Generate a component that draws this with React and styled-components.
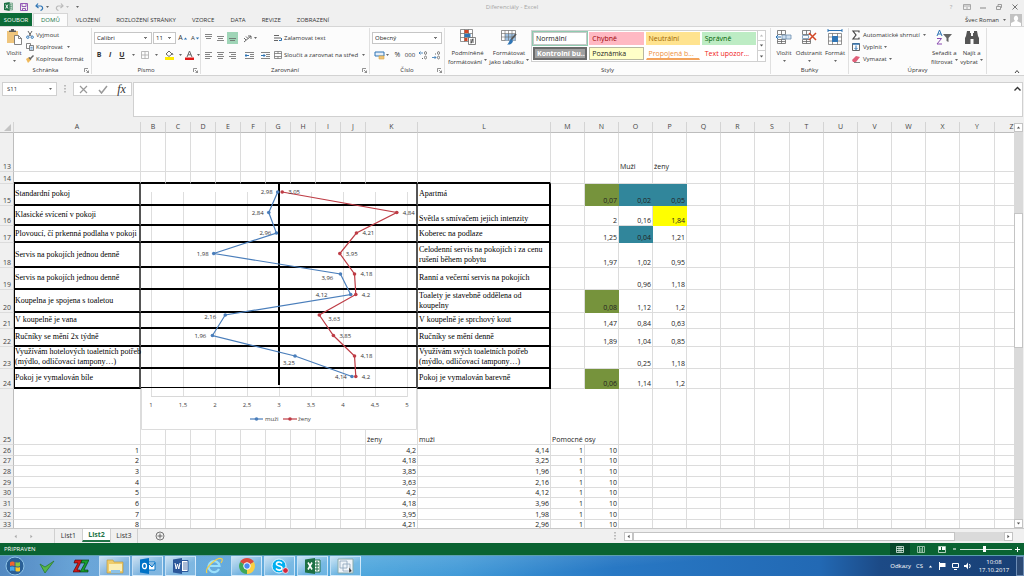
import React from "react";
import styled, { createGlobalStyle } from "styled-components";

const GlobalStyle = createGlobalStyle`
  * {
    box-sizing: border-box;
  }
  body {
    margin: 0;
    font-family: "Open Sans", "Noto Sans", sans-serif;
    font-size: 6px;
    line-height: 8px;
    color: #333;
    background: #f0f0f0;
  }
  button, input, select, textarea {
    font: inherit;
    color: inherit;
    margin: 0;
    padding: 0;
    border: 0;
    background: none;
    outline: none;
  }
  svg {
    display: block;
    flex: none;
  }
`;

const Window = styled.div`
  display: flex;
  flex-direction: column;
  height: 100vh;
  overflow: hidden;
`;

/* ---------- title bar and tabs ---------- */

const TitleBar = styled.header`
  display: grid;
  grid-template-columns: 1fr auto 1fr;
  align-items: center;
  height: 13px;
  padding: 0 4px;
  color: #a5a5a5;
`;

const QuickAccess = styled.div`
  display: flex;
  align-items: center;
  gap: 6px;
`;

const WindowButtons = styled.div`
  display: flex;
  justify-content: flex-end;
  gap: 6px;
`;

const IconButton = styled.button`
  display: flex;
  align-items: center;
  justify-content: center;
  min-width: ${p => p.$width || 10}px;
  height: 12px;
  background: ${p => (p.$active ? "#9fd5b7" : "transparent")};
`;

const TabBar = styled.nav`
  display: flex;
  height: 13px;
  align-items: stretch;
`;

const FileTab = styled.button`
  width: 32px;
  background: #0b6b37;
  color: #fff;
`;

const Tab = styled.button`
  padding: 0 8px;
  ${p =>
    p.$active &&
    `
    margin-left: 1px;
    padding: 0 7px;
    background: #fcfcfc;
    border: 1px solid #d6d6d6;
    border-bottom: 0;
    color: #217346;
  `}
`;

const Account = styled.div`
  display: flex;
  align-items: center;
  gap: 4px;
  margin-left: auto;
  padding-right: 2px;
`;

/* ---------- ribbon ---------- */

const Ribbon = styled.section`
  display: flex;
  height: 50px;
  background: #fcfcfc;
  border-top: 1px solid #d6d6d6;
  border-bottom: 1px solid #d2d2d2;
`;

const Group = styled.div`
  display: flex;
  flex-direction: column;
  width: ${p => p.$width}px;
  margin: 1px 0;
  border-right: 1px solid #e0e0e0;
`;

const GroupBody = styled.div`
  display: flex;
  flex: 1;
  padding: 1px 1px 0 2px;
`;

const GroupLabel = styled.div`
  display: flex;
  align-items: center;
  justify-content: center;
  position: relative;
  height: 8px;
`;

const Launcher = styled.button`
  position: absolute;
  right: 2px;
  top: 2px;
`;

const BigButton = styled.button`
  display: flex;
  flex-direction: column;
  align-items: center;
  width: ${p => p.$width}px;
  line-height: 8px;
  white-space: nowrap;
  svg:first-child {
    margin-bottom: 3px;
  }
`;

const BigLine = styled.span`
  display: flex;
  align-items: center;
  justify-content: center;
  gap: 2px;
  height: 9px;
`;

const BigArrow = styled.span`
  padding-top: 3px;
`;

const SmallList = styled.div`
  display: flex;
  flex-direction: column;
`;

const SumList = styled(SmallList)`
  width: 80px;
`;

const SmallButton = styled.button`
  display: flex;
  align-items: center;
  gap: 2px;
  height: 12px;
  white-space: nowrap;
`;

const ToolRows = styled.div`
  display: flex;
  flex-direction: column;
  gap: 5px;
  padding-top: 3px;
  width: ${p => (p.$width ? p.$width + "px" : "auto")};
`;

const ToolRow = styled.div`
  display: flex;
  align-items: center;
  gap: ${p => p.$gap || 0}px;
  height: 12px;
`;

const Select = styled.select`
  appearance: none;
  width: ${p => p.$width}px;
  height: 12px;
  padding: 0 2px;
  color: #222;
  border: 1px solid #c6c6c6;
  background-color: #fff;
  background-image: linear-gradient(45deg, transparent 50%, #777 50%),
    linear-gradient(-45deg, transparent 50%, #777 50%);
  background-size: 2px 2px;
  background-position: right 5px center, right 3px center;
  background-repeat: no-repeat;
`;

const Letter = styled.span`
  font-size: 7px;
  font-weight: ${p => (p.$bold ? 700 : 400)};
  font-style: ${p => (p.$italic ? "italic" : "normal")};
  text-decoration: ${p => (p.$underline ? "underline" : "none")};
`;

const Gallery = styled.div`
  display: grid;
  grid-template-columns: repeat(4, 1fr) 8px;
  width: 235px;
  height: 32px;
  margin-top: 1px;
  margin-left: 1px;
  border: 1px solid #d0d0d0;
  background: #fff;
`;

const StyleCell = styled.button`
  height: 13px;
  margin: 1px;
  padding: 0 2px;
  text-align: left;
  font-size: 7px;
  line-height: 9px;
  white-space: nowrap;
  overflow: hidden;
  color: ${p => p.$color};
  background: ${p => p.$bg};
  border: ${p => p.$border || "1px solid transparent"};
  border-bottom: ${p => p.$bottom || p.$border || "1px solid transparent"};
  outline: ${p => (p.$selected ? "1px solid #8fcbb0" : "none")};
  font-weight: ${p => (p.$bold ? 700 : 400)};
`;

const GalleryArrows = styled.div`
  grid-column: 5;
  grid-row: 1 / 3;
  display: grid;
  grid-template-rows: repeat(3, 1fr);
  border-left: 1px solid #d0d0d0;
`;

const ArrowButton = styled.button`
  display: flex;
  align-items: center;
  justify-content: center;
  border-bottom: 1px solid #d0d0d0;
  &:last-child {
    border-bottom: 0;
  }
`;

const Collapse = styled.button`
  margin: auto 4px 1px auto;
`;

/* ---------- formula bar ---------- */

const FormulaBar = styled.section`
  display: flex;
  align-items: flex-start;
  height: 46px;
  padding: 6px 1px 5px 2px;
`;

const NameBox = styled.label`
  display: flex;
  align-items: center;
  width: 55px;
  height: 14px;
  padding: 0 4px;
  background: #fff;
  border: 1px solid #d0d0d0;
  input {
    flex: 1;
    min-width: 0;
  }
`;

const Grip = styled.div`
  display: flex;
  align-items: center;
  justify-content: center;
  width: 16px;
  height: 14px;
`;

const FormulaButtons = styled.div`
  display: flex;
  align-items: center;
  justify-content: space-around;
  width: 59px;
  height: 14px;
  background: #fff;
  border: 1px solid #d0d0d0;
`;

const Fx = styled.span`
  font: italic 400 12px/12px "Liberation Serif", serif;
  color: #333;
`;

const FormulaField = styled.div`
  display: flex;
  flex: 1;
  align-self: stretch;
  margin-left: 1px;
  padding: 0 0 2px 2px;
  background: #fff;
  border: 1px solid #d0d0d0;
  textarea {
    flex: 1;
    resize: none;
  }
`;

/* ---------- sheet ---------- */

const Workspace = styled.main`
  display: flex;
  flex: 1;
  min-height: 0;
`;

const SheetPane = styled.div`
  position: relative;
  flex: 1;
  min-width: 0;
  overflow: hidden;
  background: #fff;
`;

const Sheet = styled.table`
  table-layout: fixed;
  width: 1029px;
  border-collapse: separate;
  border-spacing: 0;
  font-size: 7px;
  line-height: 8px;
  color: #222;
`;

const HeadCell = styled.th`
  height: 11px;
  padding: 0;
  font-weight: 400;
  color: #444;
  background: #f0f0f0;
  border-right: 1px solid #d4d4d4;
  border-bottom: 1px solid #bdbdbd;
`;

const RowHead = styled.th`
  padding: 0 2px 0 0;
  font-weight: 400;
  text-align: right;
  vertical-align: bottom;
  color: #444;
  background: #f0f0f0;
  border-right: 1px solid #bdbdbd;
  border-bottom: 1px solid #dcdcdc;
`;

const Cell = styled.td`
  padding: 0 1px;
  text-align: ${p => (p.$text ? "left" : "right")};
  vertical-align: bottom;
  white-space: nowrap;
  background: ${p => p.$fill || "transparent"};
  border-right: 1px solid ${p => p.$fill || "#dcdcdc"};
  border-bottom: 1px solid ${p => p.$fill || "#dcdcdc"};
`;

const Statement = styled.td`
  padding: 0 0 0 ${p => (p.$end ? 1 : 0)}px;
  font-family: "Liberation Serif", "Times New Roman", serif;
  font-size: 8px;
  line-height: 10px;
  color: #000;
  white-space: nowrap;
  vertical-align: ${p => (p.$low ? "bottom" : "middle")};
  border-bottom: 2px solid #000;
  border-right: 2px solid ${p => (p.$end ? "#000" : "#555")};
  border-left: ${p => (p.$end ? "0" : "1px solid #000")};
`;

const ChartCell = styled.td`
  padding: 0;
  border-bottom: 2px solid #000;
  border-right: 2px solid #555;
`;

const BoxTop = styled.td`
  padding: 0;
  border-right: 1px solid #dcdcdc;
  border-bottom: 2px solid #000;
`;

const Chart = styled.svg`
  position: absolute;
  left: 141px;
  top: 60px;
  font-size: 6px;
`;

const VScroll = styled.div`
  display: flex;
  flex-direction: column;
  width: 10px;
  padding: 1px 1px 0 0;
  background: #f0f0f0;
`;

const ScrollButton = styled.button`
  display: flex;
  align-items: center;
  justify-content: center;
  width: 9px;
  height: 9px;
  background: #fff;
  border: 1px solid #c4c4c4;
`;

const VTrack = styled.div`
  display: grid;
  flex: 1;
  grid-template-rows: 82fr 136fr 172fr;
  background: #dadada;
`;

const Thumb = styled.div`
  background: #fff;
  border: 1px solid #c4c4c4;
`;

const SheetBar = styled.nav`
  display: flex;
  align-items: stretch;
  height: 15px;
  font-size: 7px;
  border-top: 1px solid #c8c8c8;
`;

const SheetArrows = styled.div`
  display: flex;
  align-items: center;
  gap: 11px;
  width: 54px;
  padding-left: 13px;
`;

const SheetTab = styled.button`
  width: 28px;
  border-left: 1px solid #d0d0d0;
  border-right: ${p => (p.$last ? "1px solid #d0d0d0" : "0")};
  ${p =>
    p.$active &&
    `
    background: #fff;
    color: #217346;
    font-weight: 700;
    border-bottom: 2px solid #217346;
    margin-bottom: 1px;
  `}
`;

const AddSheet = styled.button`
  margin-left: 17px;
`;

const HScroll = styled.div`
  display: flex;
  align-items: center;
  width: 40%;
  margin-left: auto;
  padding-right: 11px;
`;

const HTrack = styled.div`
  display: grid;
  flex: 1;
  grid-template-columns: 325fr 49fr;
  height: 9px;
  background: #dadada;
`;

const StatusBar = styled.footer`
  display: flex;
  align-items: center;
  justify-content: space-between;
  height: 12px;
  padding: 0 4px;
  color: #fff;
  background: #0a6332;
`;

const ViewTools = styled.div`
  display: flex;
  align-items: center;
  gap: 1px;
`;

const ViewButton = styled.button`
  display: flex;
  align-items: center;
  justify-content: center;
  width: 20px;
  height: 12px;
  background: ${p => (p.$active ? "#07472a" : "transparent")};
`;

const Zoom = styled.input`
  appearance: none;
  width: 52px;
  height: 8px;
  margin: 0 2px;
  background: linear-gradient(#d8e8df, #d8e8df) center / 100% 1px no-repeat;
  &::-webkit-slider-thumb {
    appearance: none;
    width: 3px;
    height: 6px;
    background: #fff;
  }
`;

/* ---------- taskbar ---------- */

const Taskbar = styled.footer`
  display: flex;
  align-items: stretch;
  height: 21px;
  color: #fff;
  border-top: 1px solid #5d9fb0;
  background: linear-gradient(175deg, rgba(255, 255, 255, 0.18) 30%, transparent 60%),
    linear-gradient(90deg, #2d6fb4 0, #4a92d0 8%, #3f9fda 35%, #3b96d6 45%, #2878c4 60%, #2269b4 80%, #1c4a86 86%, #183f74 100%);
`;

const TaskButton = styled.button`
  display: flex;
  align-items: center;
  justify-content: center;
  width: ${p => p.$width || 31}px;
  margin-right: 2px;
  ${p =>
    p.$open &&
    `
    border: 1px solid rgba(225, 242, 255, 0.7);
    background: linear-gradient(150deg, rgba(255, 255, 255, 0.65), rgba(255, 255, 255, 0.15) 60%);
  `}
`;

const Tray = styled.div`
  display: flex;
  align-items: center;
  gap: 5px;
  margin-left: auto;
`;

const Clock = styled.div`
  width: 34px;
  text-align: center;
`;

const ShowDesktop = styled.button`
  align-self: stretch;
  width: 8px;
  background: #2c4a74;
  border: 1px solid #6d8db5;
`;

/* ---------- icons ---------- */

const Icon = ({ w = 10, h = w, box, children }) => (
  <svg width={w} height={h} viewBox={box || `0 0 ${w} ${h}`} fill="none" stroke="#666" aria-hidden="true">
    {children}
  </svg>
);

const Down = ({ color = "#666" }) => (
  <Icon w={3} h={2}>
    <path d="M0 0h3L1.500 2z" fill={color} stroke="none" />
  </Icon>
);

const Tri = ({ dir = 0, color = "#555" }) => (
  <Icon w={5}>
    <path d="M.8 3.600h3.400L2.500 1.500z" fill={color} stroke="none" transform={`rotate(${dir} 2.5 2.5)`} />
  </Icon>
);

const ExcelIcon = ({ size = 9 }) => (
  <Icon w={size} box="0 0 16 16">
    <path d="M9 2h6v12H9z" fill="#fff" stroke="#217346" />
    <path d="M10 5h4M10 8h4M10 11h4M12 3v10" stroke="#217346" />
    <path d="M0 1.600 10 0v16L0 14.400z" fill="#1e7145" stroke="none" />
    <path d="m3 4.500 4 7M7 4.500l-4 7" stroke="#fff" strokeWidth="1.600" />
  </Icon>
);

const LauncherIcon = () => (
  <Icon w={5}>
    <path d="M.5 4V.5H4M2 2l2.500 2.500M4.500 2.500v2h-2" strokeWidth=".7" />
  </Icon>
);

const AlignIcon = ({ lines, y = 1 }) => (
  <Icon w={9}>
    {lines.map(([x, len], i) => (
      <path key={i} d={`M${x} ${y + i * 2 + 0.5}h${len}`} strokeWidth=".8" />
    ))}
  </Icon>
);

const IndentIcon = ({ flip }) => (
  <Icon w={9}>
    <path d="M0 1.500h9M5 3.500h4M5 5.500h4M0 7.500h9" strokeWidth=".8" />
    <path d={flip ? "M0 4.500h4M2.500 3 4 4.500 2.500 6" : "M4 4.500H0M1.500 3 0 4.500 1.500 6"} stroke="#2f75b5" />
  </Icon>
);

const DecimalIcon = ({ flip }) => (
  <Icon w={9}>
    <path d={flip ? "M0 6.500h4M2.500 5 4 6.500 2.500 8" : "M4 2H0M1.500.5 0 2l1.500 1.500"} stroke="#2f75b5" strokeWidth=".8" />
    <ellipse cx="6.500" cy="2" rx="1" ry="1.500" strokeWidth=".8" />
    <ellipse cx="6.500" cy="6.500" rx="1" ry="1.500" strokeWidth=".8" />
    <path d={flip ? "M3 3h1" : "M3 7.500h1"} />
  </Icon>
);

const CellsIcon = ({ kind }) => (
  <Icon w={16}>
    <path d="M1.500 1.500h8v4h-8zM5.500 1.500v4M1.500 10.500h8v4h-8zM5.500 10.500v4M1.500 12.500h8" strokeWidth=".8" />
    {kind === "insert" && <path d="M6 6h9v4H6zM10 6v4" fill="#cfe0f0" stroke="#6d8fb0" strokeWidth=".8" />}
    {kind === "insert" && <path d="M5 8H0M2 6 0 8l2 2" stroke="#2f75b5" />}
    {kind === "delete" && <path d="M1.500 6.500h6v3h-6z" stroke="#6d8fb0" strokeWidth=".8" />}
    {kind === "delete" && <path d="m8 4 7 7M15 4l-7 7" stroke="#d24726" strokeWidth="1.500" />}
  </Icon>
);

const FormatIcon = () => (
  <Icon w={16}>
    <path d="M1 0v3M15 0v3M1 1.500h14" stroke="#2f75b5" />
    <path d="M1.500 4.500h13v11h-13zM1.500 8h13M1.500 12h13M5.500 4.500v11M10.500 4.500v11" fill="#fff" strokeWidth=".7" />
    <path d="M5 7h6v6H5z" fill="#2f75b5" stroke="none" />
  </Icon>
);

const PasteIcon = () => (
  <Icon w={16}>
    <path d="M1 2h11v12H1z" fill="#efc57c" stroke="none" />
    <path d="M3 3V1.500h2V0h3v1.500h2V3z" fill="#5c5c5c" stroke="none" />
    <path d="M8.500 6.500h4l3 3v6h-7z" fill="#fff" strokeWidth=".8" />
    <path d="M12.500 6.500v3h3" strokeWidth=".8" />
  </Icon>
);

const CutIcon = () => (
  <Icon w={8}>
    <path d="M2 0l3 5M6 0 3 5" />
    <circle cx="1.800" cy="6.200" r="1.200" stroke="#2f75b5" />
    <circle cx="6.200" cy="6.200" r="1.200" stroke="#2f75b5" />
  </Icon>
);

const CopyIcon = () => (
  <Icon w={8}>
    <path d="M.5.5h4v5h-4z" fill="#fff" strokeWidth=".8" />
    <path d="M3.500 2.500h4v5h-4z" fill="#dce9f5" strokeWidth=".8" />
    <path d="M4.500 4.500h2M4.500 6h2" stroke="#2f75b5" strokeWidth=".6" />
  </Icon>
);

const BrushIcon = () => (
  <Icon w={8}>
    <path d="M0 4l3-2 2 3-3 3z" fill="#f0b95a" stroke="none" />
    <path d="M3 2.500 5 4.500M4.500 3.500 7.500.5" strokeWidth="1.500" />
  </Icon>
);

const CondIcon = () => (
  <Icon w={16}>
    <path d="M.5.5h12v12H.5zM.5 4.500h12M.5 8.500h12M4.500.5v12M8.500.5v12" fill="#fff" strokeWidth=".7" />
    <path d="M4.500 1h4v3h-4zM4.500 9h3v3h-3z" fill="#d24726" stroke="none" />
    <path d="M4.500 5h6v3h-6z" fill="#2f75b5" stroke="none" />
    <path d="M8.500 8.500h7v7h-7z" fill="#fff" strokeWidth=".8" />
    <path d="M10 11h4M10 13h4M13 9.500l-2 5" stroke="#333" strokeWidth=".8" />
  </Icon>
);

const TableIcon = () => (
  <Icon w={16}>
    <path d="M.5 1.500h14v10H.5z" fill="#fff" strokeWidth=".7" />
    <path d="M4 5h10.500v6.500H4z" fill="#9dc0e2" stroke="none" />
    <path d="M.5 4.500h14M.5 8h14M4 1.500v10M7.500 1.500v10M11 1.500v10" strokeWidth=".6" />
    <path d="m15 5-5 6" stroke="#555" strokeWidth="1.800" />
    <path d="m10 10 2 2c-1 3-3 4-6 3.500 2-1 2-4 4-5.500z" fill="#2f75b5" stroke="none" />
  </Icon>
);

const SortIcon = () => (
  <Icon w={16}>
    <path d="M1 7 3.500 1 6 7M2 5h3" stroke="#2f75b5" />
    <path d="M1 9.500h4.500L1 15h5" stroke="#8a4ab0" />
    <path d="M7 5h9l-3.500 4v4L10.500 12V9z" fill="#666" stroke="none" />
  </Icon>
);

const FindIcon = () => (
  <Icon w={16}>
    <path d="M3 2h3v2h1v3h2V4h1V2h3l1 5 1 2v6H9.500v-5h-3v5H1V9l1-2z" fill="#555" stroke="none" />
  </Icon>
);

/* ---------- data ---------- */

const columns = [
  ["A", 127],
  ..."BCDEFGHIJ".split("").map(c => [c, 25]),
  ["K", 52],
  ["L", 133],
  ..."MNOPQR".split("").map(c => [c, 34]),
  ["S", 35],
  ..."TUVWX".split("").map(c => [c, 34]),
  ["Y", 35],
  ["Z", 34]
];

const GREEN = "#76933c";
const TEAL = "#31869b";

// row number, height, left statement, right statement, N / O / P values with fills
const profile = [
  [15, 22, "Standardní pokoj", "Apartmá", ["0,07", GREEN], ["0,02", TEAL], ["0,05", TEAL]],
  [16, 20, "Klasické svícení v pokoji", "Světla s smívačem jejich intenzity", ["2"], ["0,16"], ["1,84", "#ffff00"]],
  [17, 17, "Plovoucí, čí prkenná podlaha v pokoji", "Koberec na podlaze", ["1,25"], ["0,04", TEAL], ["1,21"]],
  [18, 25, "Servis na pokojích jednou denně", "Celodenní servis na pokojích i za cenu\nrušení během pobytu", ["1,97"], ["1,02"], ["0,95"]],
  [19, 22, "Servis na pokojích jednou denně", "Ranní a večerní servis na pokojích", [""], ["0,96"], ["1,18"]],
  [20, 23, "Koupelna je spojena s toaletou", "Toalety je stavebně oddělena od\nkoupelny", ["0,08", GREEN], ["1,12"], ["1,2"]],
  [21, 16, "V koupelně je vana", "V koupelně je sprchový kout", ["1,47"], ["0,84"], ["0,63"]],
  [22, 18, "Ručníky se mění 2x týdně", "Ručníky se mění denně", ["1,89"], ["1,04"], ["0,85"]],
  [23, 22, "Využívám hotelových toaletních potřeb\n(mýdlo, odličovací tampony…)", "Využívám svých toaletních potřeb\n(mýdlo, odličovací tampony…)", [""], ["0,25"], ["1,18"]],
  [24, 20, "Pokoj je vymalován bíle", "Pokoj je vymalován barevně", ["0,06", GREEN], ["1,14"], ["1,2"]]
];

const source = [
  [26, 11, "4,2", "4,14"],
  [27, 10, "4,18", "3,25"],
  [28, 11, "3,85", "1,96"],
  [29, 11, "3,63", "2,16"],
  [30, 10, "4,2", "4,12"],
  [31, 11, "4,18", "3,96"],
  [32, 11, "3,95", "1,98"],
  [33, 10, "4,21", "2,96"]
];

// value, label offset from the marker
const men = [
  [2.98, -17, 2], [2.84, -17, 2], [2.96, -17, 2], [1.98, -17, 2], [3.96, -19, 6],
  [4.12, -35, 2], [2.16, -21, 4], [1.96, -18, 2], [3.25, -12, 9], [4.14, -17, 2]
];
const women = [
  [3.05, 6, 2], [4.84, 6, 2], [4.21, 6, 2], [3.95, 6, 2], [4.18, 6, 2],
  [4.2, 6, 2], [3.63, 9, 6], [3.85, 6, 2], [4.18, 6, 2], [4.2, 6, 2]
];

const px = v => 10 + (v - 1) * 64;
const py = i => 10 + i * 20.5;
const comma = v => String(v).replace(".", ",");

const Series = ({ data, color }) => (
  <g>
    <polyline points={data.map(([v], i) => `${px(v)},${py(i)}`).join(" ")} fill="none" stroke={color} strokeWidth="1.200" />
    {data.map(([v, dx, dy], i) => (
      <g key={i}>
        <circle cx={px(v)} cy={py(i)} r="1.800" fill={color} />
        <text x={px(v) + dx} y={py(i) + dy} fill="#333">{comma(v)}</text>
      </g>
    ))}
  </g>
);

const ProfileChart = () => (
  <Chart width="277" height="250" viewBox="0 0 277 250">
    <rect x="0" y="206" width="276" height="42" fill="#fff" />
    <path d="M.5 206v41.500h275V206" fill="none" stroke="#dcdcdc" />
    {[1, 1.5, 2, 2.5, 3, 3.5, 4, 4.5, 5].map(v => (
      <g key={v}>
        <path d={`M${px(v) + 0.5} 10v205`} stroke="#000" strokeOpacity=".13" />
        <text x={px(v)} y="225" textAnchor="middle" fill="#444">{comma(v)}</text>
      </g>
    ))}
    <path d="M10 214.500h256" stroke="#d8d8d8" />
    <path d="M138 0v203" stroke="#000" strokeWidth="2" />
    <Series data={men} color="#4a7ebb" />
    <Series data={women} color="#be3c45" />
    <path d="M109 237h13" stroke="#4a7ebb" strokeWidth="1.200" />
    <circle cx="115.500" cy="237" r="1.800" fill="#4a7ebb" />
    <text x="124" y="239" fill="#444">muži</text>
    <path d="M142 237h14" stroke="#be3c45" strokeWidth="1.200" />
    <circle cx="149" cy="237" r="1.800" fill="#be3c45" />
    <text x="157" y="239" fill="#444">ženy</text>
  </Chart>
);

const Blank = ({ count }) => Array.from({ length: count }, (_, i) => <Cell key={i} />);

const Lines = ({ text }) =>
  text.split("\n").map((line, i) => (
    <React.Fragment key={i}>
      {i > 0 && <br />}
      {line}
    </React.Fragment>
  ));

const Spreadsheet = () => (
  <SheetPane>
    <Sheet>
      <colgroup>
        <col style={{ width: 14 }} />
        {columns.map(([name, width]) => (
          <col key={name} style={{ width }} />
        ))}
      </colgroup>
      <thead>
        <tr>
          <HeadCell aria-label="Vybrat vše">
            <Icon w={12} h={8}>
              <path d="M11 1v7H4z" fill="#c4c4c4" stroke="none" />
            </Icon>
          </HeadCell>
          {columns.map(([name]) => (
            <HeadCell key={name}>{name}</HeadCell>
          ))}
        </tr>
      </thead>
      <tbody>
        <tr style={{ height: 39 }}>
          <RowHead>13</RowHead>
          <Blank count={14} />
          <Cell $text>Muži</Cell>
          <Cell $text>ženy</Cell>
          <Blank count={10} />
        </tr>
        <tr style={{ height: 12 }}>
          <RowHead>14</RowHead>
          {columns.slice(0, 12).map(([name]) => (
            <BoxTop key={name} />
          ))}
          <Blank count={14} />
        </tr>
        {profile.map(([row, height, left, right, ...values]) => (
          <tr key={row} style={{ height }}>
            <RowHead>{row}</RowHead>
            <Statement><Lines text={left} /></Statement>
            <ChartCell colSpan={10} />
            <Statement $end $low={row === 16}><Lines text={right} /></Statement>
            <Cell />
            {values.map(([value, fill], i) => (
              <Cell key={i} $fill={fill}>{value}</Cell>
            ))}
            <Blank count={10} />
          </tr>
        ))}
        <tr style={{ height: 56 }}>
          <RowHead>25</RowHead>
          <Blank count={10} />
          <Cell $text>ženy</Cell>
          <Cell $text>muži</Cell>
          <Cell $text colSpan={2}>Pomocné osy</Cell>
          <Blank count={12} />
        </tr>
        {source.map(([row, height, w, m], i) => (
          <tr key={row} style={{ height }}>
            <RowHead>{row}</RowHead>
            <Cell>{i + 1}</Cell>
            <Blank count={9} />
            <Cell>{w}</Cell>
            <Cell>{m}</Cell>
            <Cell>1</Cell>
            <Cell>10</Cell>
            <Blank count={12} />
          </tr>
        ))}
      </tbody>
    </Sheet>
    <ProfileChart />
  </SheetPane>
);

const RibbonGroup = ({ label, width, launcher, children }) => (
  <Group $width={width}>
    <GroupBody>{children}</GroupBody>
    <GroupLabel>
      {label}
      {launcher && <Launcher aria-label={`${label} – další`}><LauncherIcon /></Launcher>}
    </GroupLabel>
  </Group>
);

const Big = ({ icon, width, lines, arrow }) => (
  <BigButton $width={width}>
    {icon}
    {lines.map((line, i) => (
      <BigLine key={line}>
        {line}
        {i === 1 && <span><Down /></span>}
      </BigLine>
    ))}
    {arrow && <BigArrow><Down /></BigArrow>}
  </BigButton>
);

const RibbonBar = () => (
  <Ribbon>
    <RibbonGroup label="Schránka" width={92} launcher>
      <Big icon={<PasteIcon />} width={24} lines={["Vložit"]} arrow />
      <SmallList>
        <SmallButton><CutIcon />Vyjmout</SmallButton>
        <SmallButton><CopyIcon />Kopírovat&nbsp; <Down /></SmallButton>
        <SmallButton><BrushIcon />Kopírovat formát</SmallButton>
      </SmallList>
    </RibbonGroup>
    <RibbonGroup label="Písmo" width={109} launcher>
      <ToolRows>
        <ToolRow $gap={1}>
          <Select $width={58} aria-label="Písmo"><option>Calibri</option></Select>
          <Select $width={23} aria-label="Velikost písma"><option>11</option></Select>
          <IconButton $width={12} aria-label="Zvětšit písmo"><Letter>A</Letter><Tri color="#2f75b5" /></IconButton>
          <IconButton $width={11} aria-label="Zmenšit písmo">A<Tri dir={180} color="#2f75b5" /></IconButton>
        </ToolRow>
        <ToolRow>
          <IconButton $width={10}><Letter $bold>B</Letter></IconButton>
          <IconButton $width={12}><Letter $bold $italic>I</Letter></IconButton>
          <IconButton $width={12}><Letter $bold $underline>U</Letter></IconButton>
          <IconButton $width={10} aria-label="Podtržení"><Down /></IconButton>
          <IconButton $width={14} aria-label="Ohraničení">
            <Icon w={8}><path d="M.5.5h7v7h-7zM4 .5v7M.5 4h7" stroke="#aaa" strokeWidth=".8" /></Icon>
          </IconButton>
          <IconButton $width={8} aria-label="Další ohraničení"><Down /></IconButton>
          <IconButton $width={18} aria-label="Barva výplně">
            <Icon w={9} h={10}>
              <path d="M0 7h9v3H0z" fill="#ffeb00" stroke="none" />
              <path d="m1 4 3-3 3 3-3 2.500zM7 3l1 2" fill="#fff" />
            </Icon>
          </IconButton>
          <IconButton $width={5} aria-label="Další výplně"><Down /></IconButton>
          <IconButton $width={12} aria-label="Barva písma">
            <Icon w={9} h={10}>
              <path d="M0 7.500h9V10H0z" fill="#e01818" stroke="none" />
              <path d="m2 7 2.500-6L7 7M3 4.800h3" />
            </Icon>
          </IconButton>
          <IconButton $width={6} aria-label="Další barvy"><Down /></IconButton>
        </ToolRow>
      </ToolRows>
    </RibbonGroup>
    <RibbonGroup label="Zarovnání" width={169} launcher>
      <ToolRows $width={71}>
        <ToolRow $gap={1}>
          <IconButton $width={11} aria-label="Nahoru"><AlignIcon y={0} lines={[[1, 7], [1, 7], [2, 5]]} /></IconButton>
          <IconButton $width={11} aria-label="Na střed"><AlignIcon y={2} lines={[[1, 7], [2, 5], [1, 7]]} /></IconButton>
          <IconButton $width={11} $active aria-label="Dolů"><AlignIcon y={4} lines={[[1, 7], [2, 5]]} /></IconButton>
          <IconButton $width={22} aria-label="Orientace">
            <Icon w={9}><path d="m1 8 7-6M5 2h3v3M1 4l2 2M3 2.500l2 2" /></Icon>
            &nbsp;<Down />
          </IconButton>
        </ToolRow>
        <ToolRow $gap={1}>
          <IconButton $width={11} aria-label="Vlevo"><AlignIcon lines={[[1, 7], [1, 5], [1, 7], [1, 5]]} /></IconButton>
          <IconButton $width={11} aria-label="Na střed"><AlignIcon lines={[[1, 7], [2, 5], [1, 7], [2, 5]]} /></IconButton>
          <IconButton $width={11} aria-label="Vpravo"><AlignIcon lines={[[1, 7], [3, 5], [1, 7], [3, 5]]} /></IconButton>
          <IconButton $width={20} aria-label="Zmenšit odsazení"><IndentIcon /></IconButton>
          <IconButton $width={10} aria-label="Zvětšit odsazení"><IndentIcon flip /></IconButton>
        </ToolRow>
      </ToolRows>
      <ToolRows>
        <SmallButton>
          <Icon w={8}><path d="M0 1.500h5M0 4h7M0 6.500h4" /><path d="M5 6.500h2.500V4" stroke="#2f75b5" /></Icon>
          Zalamovat text
        </SmallButton>
        <SmallButton>
          <Icon w={8}><path d="M.5.5h7v7h-7zM.5 2.500h7M.5 5.500h7M4 .5v2M4 5.500v2" strokeWidth=".7" /></Icon>
          Sloučit a zarovnat na střed&nbsp; <Down />
        </SmallButton>
      </ToolRows>
    </RibbonGroup>
    <RibbonGroup label="Číslo" width={75} launcher>
      <ToolRows>
        <Select $width={70} aria-label="Formát čísla"><option>Obecný</option></Select>
        <ToolRow>
          <IconButton $width={19} aria-label="Měna">
            <Icon w={11} h={9}>
              <path d="M1 1h9v4H1z" stroke="#2f75b5" fill="#e6eff8" />
              <path d="M5 5h5v3H5z" fill="#efc57c" stroke="#d9a441" strokeWidth=".6" />
            </Icon>
            &nbsp;<Down />
          </IconButton>
          <IconButton $width={13}><Letter>%</Letter></IconButton>
          <IconButton $width={12}>000</IconButton>
          <IconButton $width={15} aria-label="Přidat desetinné místo"><DecimalIcon /></IconButton>
          <IconButton $width={10} aria-label="Odebrat desetinné místo"><DecimalIcon flip /></IconButton>
        </ToolRow>
      </ToolRows>
    </RibbonGroup>
    <RibbonGroup label="Styly" width={326}>
      <Big icon={<CondIcon />} width={41} lines={["Podmíněné", "formátování"]} />
      <Big icon={<TableIcon />} width={42} lines={["Formátovat", "jako tabulku"]} />
      <Gallery>
        <StyleCell $color="#222" $bg="#fff" $border="1px solid #c8c8c8" $selected>Normální</StyleCell>
        <StyleCell $color="#9c0006" $bg="#ffb9c3">Chybně</StyleCell>
        <StyleCell $color="#9c6500" $bg="#ffe38f">Neutrální</StyleCell>
        <StyleCell $color="#006100" $bg="#bdecc4">Správně</StyleCell>
        <StyleCell $color="#fff" $bg="#a0a0a0" $border="2px solid #6a6a6a" $bold>Kontrolní bu...</StyleCell>
        <StyleCell $color="#222" $bg="#ffffc8" $border="1px solid #b8b8a0">Poznámka</StyleCell>
        <StyleCell $color="#ee8f3c" $bg="#fff" $bottom="2px solid #f3a35c">Propojená b...</StyleCell>
        <StyleCell $color="#f02020" $bg="#fff">Text upozor...</StyleCell>
        <GalleryArrows>
          <ArrowButton aria-label="Předchozí"><Tri color="#bbb" /></ArrowButton>
          <ArrowButton aria-label="Další"><Tri dir={180} /></ArrowButton>
          <ArrowButton aria-label="Více"><Tri dir={180} /></ArrowButton>
        </GalleryArrows>
      </Gallery>
    </RibbonGroup>
    <RibbonGroup label="Buňky" width={78}>
      <Big icon={<CellsIcon kind="insert" />} width={22} lines={["Vložit"]} arrow />
      <Big icon={<CellsIcon kind="delete" />} width={28} lines={["Odstranit"]} arrow />
      <Big icon={<FormatIcon />} width={24} lines={["Formát"]} arrow />
    </RibbonGroup>
    <RibbonGroup label="Úpravy" width={138}>
      <SumList>
        <SmallButton>
          <Icon w={10}><path d="M8 2.500V1H2l3 4-3 4h6V7.500" stroke="#444" strokeWidth="1.200" /></Icon>
          Automatické shrnutí&nbsp; <Down />
        </SmallButton>
        <SmallButton>
          <Icon w={10}>
            <path d="M1.500 1.500h7v7h-7z" /><path d="M1.500 2h7" stroke="#2f75b5" strokeWidth="1.500" />
            <path d="M5 3.500v4M3.500 6 5 7.500 6.500 6" stroke="#2f75b5" />
          </Icon>
          Vyplnit <Down />
        </SmallButton>
        <SmallButton>
          <Icon w={10}><path d="m1 6 4-4 4 1-4 5H2z" fill="#e0607a" stroke="none" /><path d="M3 8.500h6" strokeWidth=".8" /></Icon>
          Vymazat <Down />
        </SmallButton>
      </SumList>
      <Big icon={<SortIcon />} width={28} lines={["Seřadit a", "filtrovat"]} />
      <Big icon={<FindIcon />} width={27} lines={["Najít a", "vybrat"]} />
    </RibbonGroup>
    <Collapse aria-label="Sbalit pás karet">
      <Icon w={6} h={5}><path d="m1 4 2-2.500L5 4" stroke="#444" /></Icon>
    </Collapse>
  </Ribbon>
);

const TopBars = () => (
  <>
    <TitleBar>
      <QuickAccess>
        <ExcelIcon size={9} />
        <IconButton aria-label="Uložit">
          <Icon w={8}><path d="M.5.5h7v7h-7zM2 .5v3h4v-3M2.500 7.500v-2h3v2" stroke="#8a4ab0" strokeWidth=".9" /></Icon>
        </IconButton>
        <IconButton $width={14} aria-label="Zpět">
          <Icon w={9} h={8}><path d="M3 .5 1 3l2.500 2M1 3h5c2.500 1 2 4-.5 4.500" stroke="#2f75b5" strokeWidth="1.200" /></Icon>
          &nbsp;<Down />
        </IconButton>
        <IconButton $width={14} aria-label="Znovu">
          <Icon w={9} h={8}><path d="m6 .5 2 2.500-2.500 2M8 3H3C.5 4 1 7 3.500 7.500" stroke="#bbb" strokeWidth="1.200" /></Icon>
          &nbsp;<Down color="#bbb" />
        </IconButton>
        <IconButton $width={5} aria-label="Přizpůsobit"><Down /></IconButton>
      </QuickAccess>
      <span>Diferenciály - Excel</span>
      <WindowButtons>
        <IconButton>?</IconButton>
        <IconButton aria-label="Zobrazení pásu">
          <Icon w={8} h={6}><path d="M.5.5h7v5h-7zM.5 2h7M4 5V3" stroke="#999" strokeWidth=".8" /></Icon>
        </IconButton>
        <IconButton aria-label="Minimalizovat">
          <Icon w={6}><path d="M0 4h6" stroke="#888" /></Icon>
        </IconButton>
        <IconButton aria-label="Obnovit">
          <Icon w={6}><path d="M.5 2.500h4v3h-4zM2 2V.5h3.500v3H5" stroke="#888" strokeWidth=".8" /></Icon>
        </IconButton>
        <IconButton aria-label="Zavřít">
          <Icon w={6}><path d="m.5.5 5 5M5.500.5l-5 5" stroke="#777" /></Icon>
        </IconButton>
      </WindowButtons>
    </TitleBar>
    <TabBar>
      <FileTab>SOUBOR</FileTab>
      <Tab $active>DOMŮ</Tab>
      <Tab>VLOŽENÍ</Tab>
      <Tab>ROZLOŽENÍ STRÁNKY</Tab>
      <Tab>VZORCE</Tab>
      <Tab>DATA</Tab>
      <Tab>REVIZE</Tab>
      <Tab>ZOBRAZENÍ</Tab>
      <Account>
        Švec Roman
        <Down />
        <Icon w={12}>
          <path d="M0 0h12v12H0z" fill="#c2c2c2" stroke="none" />
          <path d="M6 1.500a2.500 3 0 0 1 1 5.500l4 2v3H1V9l4-2a2.500 3 0 0 1 1-5.500z" fill="#fff" stroke="none" />
        </Icon>
      </Account>
    </TabBar>
  </>
);

const SystemBar = () => (
  <Taskbar>
    <TaskButton $width={29} aria-label="Start">
      <Icon w={20}>
        <circle cx="10" cy="10" r="9" fill="#2a5f96" stroke="#8fc4e8" />
        <path d="M5 6.500q2-1.500 4.500-.5v4q-2.500-1-4.500 0z" fill="#f0642f" stroke="none" />
        <path d="M10.500 6q2 1 4.500 0v4q-2.500 1-4.500 0z" fill="#8cc63e" stroke="none" />
        <path d="M5 11q2-1 4.500 0v4Q7 14 5 15z" fill="#46a8e8" stroke="none" />
        <path d="M10.500 11q2.500 1 4.500 0v4q-2 1-4.500 0z" fill="#fbc824" stroke="none" />
      </Icon>
    </TaskButton>
    <TaskButton aria-label="Kontrola">
      <Icon w={16}><path d="m1 6 5 3 9-6-9 12z" fill="#55b848" stroke="#2c7a2c" strokeWidth=".8" /></Icon>
    </TaskButton>
    <TaskButton $width={33} aria-label="ZZ">
      <Icon w={16} h={14}>
        <path d="M2 1h7L4 11h3v2H0l5-9H1z" fill="#d01818" stroke="#400" strokeWidth=".6" />
        <path d="M9 1h7l-5 10h4v2H7l5-9H8z" fill="#18a030" stroke="#030" strokeWidth=".6" />
      </Icon>
    </TaskButton>
    <TaskButton $open aria-label="Průzkumník">
      <Icon w={18} h={16}>
        <path d="M1 2h6l1 2h9v11H1z" fill="#eecb6a" stroke="#b99436" strokeWidth=".6" />
        <path d="M3 6h13v7H3z" fill="#fbeeb5" stroke="none" />
        <path d="M5 12h9v3H5z" fill="#8cc2e8" stroke="none" />
      </Icon>
    </TaskButton>
    <TaskButton $open aria-label="Outlook">
      <Icon w={16}>
        <path d="M8 4h7v8H8zM8 5l4 4 3-4" fill="#fff" stroke="#0072c6" />
        <path d="M0 1.500 9 0v16l-9-1.500z" fill="#0072c6" stroke="none" />
        <ellipse cx="4.500" cy="8" rx="2" ry="2.700" stroke="#fff" strokeWidth="1.300" />
      </Icon>
    </TaskButton>
    <TaskButton $open aria-label="Word">
      <Icon w={16}>
        <path d="M8 2.500h7v11H8z" fill="#fff" stroke="#2b579a" />
        <path d="M10 5h4M10 7h4M10 9h4M10 11h4" stroke="#2b579a" strokeWidth=".8" />
        <path d="M0 1.500 9 0v16l-9-1.500z" fill="#2b579a" stroke="none" />
        <path d="m2 5 1.200 6L4.500 6l1.300 5L7 5" stroke="#fff" />
      </Icon>
    </TaskButton>
    <TaskButton aria-label="Internet Explorer">
      <Icon w={18}>
        <path d="M14 12A5.500 5.500 0 1 1 14.500 9H5" stroke="#9be0fb" strokeWidth="2.200" />
        <path d="M2 16C-1 11 13-1 17 2q1 1-1 4" stroke="#f3cf4a" strokeWidth="1.200" />
      </Icon>
    </TaskButton>
    <TaskButton $open aria-label="Chrome">
      <Icon w={16}>
        <path d="M8 8 1.100 4A8 8 0 0 1 14.900 4z" fill="#dd4b3e" stroke="none" />
        <path d="m8 8 6.900-4A8 8 0 0 1 8 16z" fill="#fbd043" stroke="none" />
        <path d="M8 8v8A8 8 0 0 1 1.100 4z" fill="#3fa757" stroke="none" />
        <circle cx="8" cy="8" r="3.300" fill="#4a8af4" stroke="#fff" />
      </Icon>
    </TaskButton>
    <TaskButton $open aria-label="Skype">
      <Icon w={18} h={16}>
        <circle cx="8" cy="8" r="7" fill="#00aff0" stroke="#e4f6ff" />
        <path d="M11 5.500C9 3 5 4 5.500 6.300 6 8.500 11 7.500 11 10s-4 3-6 .5" stroke="#fff" strokeWidth="1.600" />
        <circle cx="14.500" cy="12.500" r="2.800" fill="#d2263c" stroke="#fff" strokeWidth=".7" />
      </Icon>
    </TaskButton>
    <TaskButton $open aria-label="Excel"><ExcelIcon size={16} /></TaskButton>
    <TaskButton $open aria-label="Výstřižky">
      <Icon w={17} h={16}>
        <path d="M1 1h15v14H1z" fill="#eef4f9" stroke="#8aa" />
        <path d="M3 3h7v7H3zM6 6h7v7H6z" stroke="#8ba3ba" strokeWidth=".8" />
        <path d="M12 9v6l3-2z" fill="#333" stroke="#fff" strokeWidth=".4" />
      </Icon>
    </TaskButton>
    <Tray>
      <span>Odkazy</span>
      <span>CS</span>
      <Tri color="#fff" />
      <Icon w={8}><path d="M1.500 0v8" stroke="#fff" /><path d="M2 1h5.500v4H2z" fill="#fff" stroke="none" /></Icon>
      <Icon w={8}><path d="M1.500 1.500h6v4h-6zM3 7.500h3" stroke="#fff" /></Icon>
      <Icon w={8}><path d="M0 3h2l2-2.500v7L2 5H0z" fill="#fff" stroke="none" /><path d="M5.500 2q1.500 2 0 4" stroke="#fff" /></Icon>
      <Clock>10:08<br />17.10.2017</Clock>
      <ShowDesktop aria-label="Zobrazit plochu" />
    </Tray>
  </Taskbar>
);

export default function App() {
  return (
    <Window>
      <GlobalStyle />
      <TopBars />
      <RibbonBar />
      <FormulaBar>
        <NameBox>
          <input aria-label="Pole názvů" defaultValue="S11" />
          <Down />
        </NameBox>
        <Grip>
          <Icon w={2} h={8}><path d="M1 0v1.500M1 3v1.500M1 6v1.500" stroke="#888" /></Icon>
        </Grip>
        <FormulaButtons>
          <IconButton aria-label="Zrušit"><Icon w={9}><path d="m1 1 7 7M8 1 1 8" stroke="#999" strokeWidth="1.200" /></Icon></IconButton>
          <IconButton aria-label="Zadat"><Icon w={10} h={9}><path d="m1 5 2.500 3L9 1" stroke="#999" strokeWidth="1.500" /></Icon></IconButton>
          <IconButton><Fx>fx</Fx></IconButton>
        </FormulaButtons>
        <FormulaField>
          <textarea aria-label="Řádek vzorců" />
          <IconButton aria-label="Sbalit řádek vzorců">
            <Icon w={7} h={6}><path d="m.5 4.500 3-3 3 3" stroke="#333" strokeWidth="1.400" /></Icon>
          </IconButton>
        </FormulaField>
      </FormulaBar>
      <Workspace>
        <Spreadsheet />
        <VScroll>
          <ScrollButton aria-label="Nahoru"><Tri /></ScrollButton>
          <VTrack><span /><Thumb /></VTrack>
          <ScrollButton aria-label="Dolů"><Tri dir={180} /></ScrollButton>
        </VScroll>
      </Workspace>
      <SheetBar>
        <SheetArrows>
          <Tri dir={270} color="#aaa" />
          <Tri dir={90} color="#aaa" />
        </SheetArrows>
        <SheetTab>List1</SheetTab>
        <SheetTab $active>List2</SheetTab>
        <SheetTab $last>List3</SheetTab>
        <AddSheet aria-label="Nový list">
          <Icon w={10}><circle cx="5" cy="5" r="4" strokeWidth=".9" /><path d="M5 2.500v5M2.500 5h5" /></Icon>
        </AddSheet>
        <HScroll>
          <Icon w={10} h={8}><path d="M1 0v1.500M1 3v1.500M1 6v1.500" stroke="#888" /></Icon>
          <ScrollButton aria-label="Vlevo"><Tri dir={270} /></ScrollButton>
          <HTrack><Thumb /></HTrack>
          <ScrollButton aria-label="Vpravo"><Tri dir={90} /></ScrollButton>
        </HScroll>
      </SheetBar>
      <StatusBar>
        <span>PŘIPRAVEN</span>
        <ViewTools>
          <ViewButton $active aria-label="Normálně">
            <Icon w={8} h={7}><path d="M.5.5h7v6h-7zM.5 2.500h7M.5 4.500h7M3 .5v6M5 .5v6" stroke="#dcebe2" strokeWidth=".8" /></Icon>
          </ViewButton>
          <ViewButton aria-label="Rozložení stránky">
            <Icon w={8} h={7}><path d="M.5.5h7v6h-7zM2.500 1v5.500M5.500 1v5.500M3 3h2M3 5h2" stroke="#b5d3c1" strokeWidth=".8" /></Icon>
          </ViewButton>
          <ViewButton aria-label="Zalomení stránek">
            <Icon w={8} h={7}><path d="M.5.5h7v6h-7z" stroke="#dcebe2" strokeWidth=".8" /><path d="M1 1h2v3H1zM4 1h3v3H4z" fill="#fff" stroke="none" /></Icon>
          </ViewButton>
          <Icon w={4}><path d="M0 2h3" stroke="#fff" /></Icon>
          <Zoom type="range" aria-label="Lupa" defaultValue="47" />
          <Icon w={5}><path d="M0 2.500h5M2.500 0v5" stroke="#fff" /></Icon>
        </ViewTools>
      </StatusBar>
      <SystemBar />
    </Window>
  );
}
